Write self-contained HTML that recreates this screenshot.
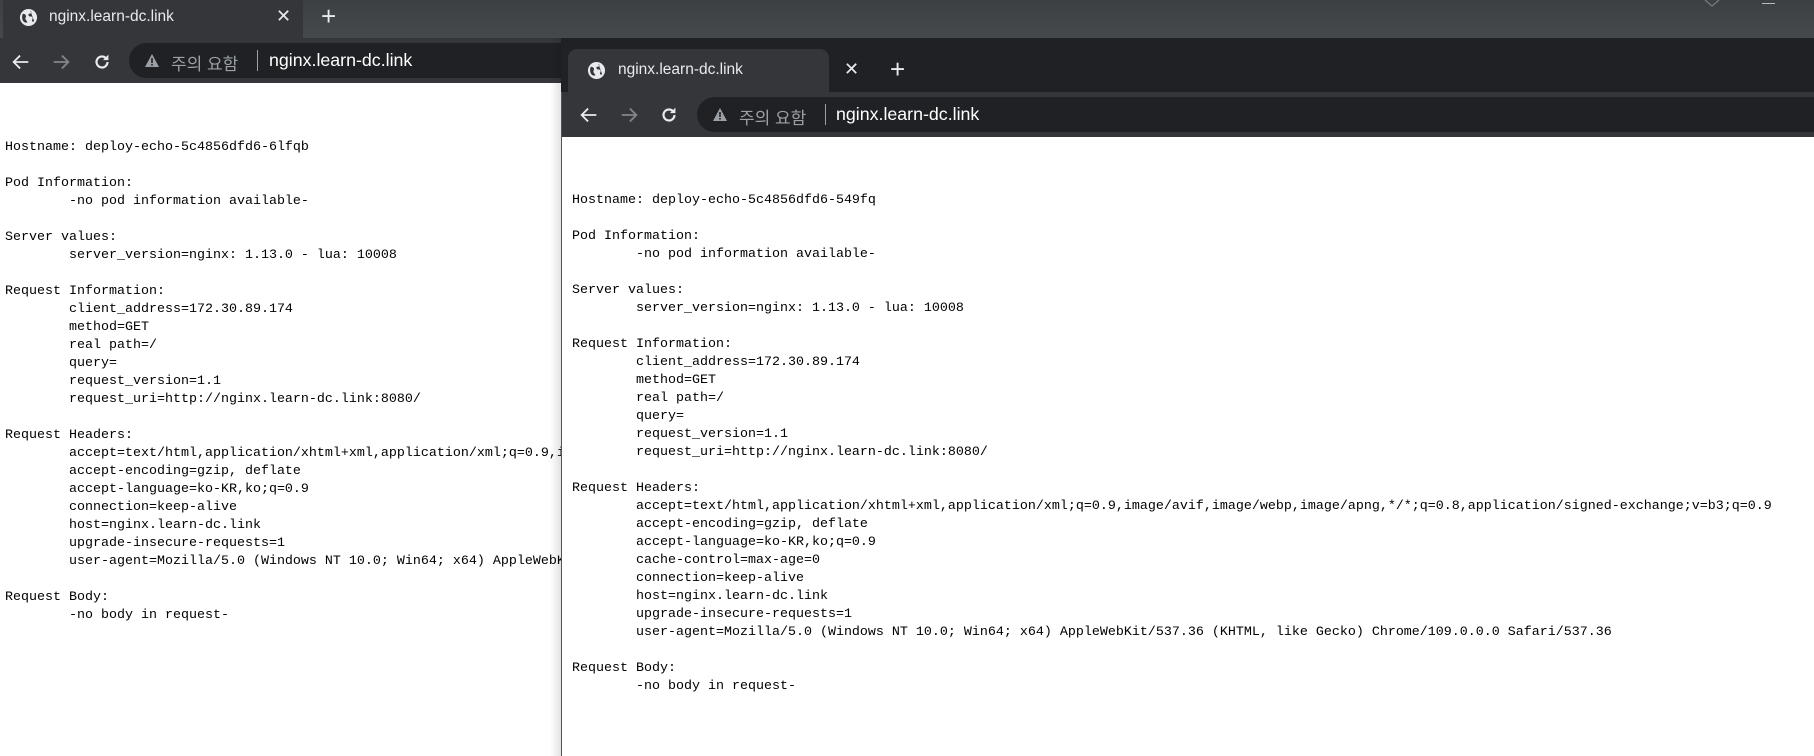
<!DOCTYPE html>
<html><head><meta charset="utf-8"><style>
*{margin:0;padding:0;box-sizing:border-box}
body{width:1814px;height:756px;overflow:hidden;background:#fff;position:relative;font-family:"Liberation Sans","Noto Sans CJK KR",sans-serif}
.abs{position:absolute}
pre{position:absolute;font-family:"Liberation Mono","NanumGothic",monospace;font-size:13.33px;line-height:18px;color:#000;white-space:pre}
.tabt{color:#e8eaed;font-size:15.5px}
.url{font-size:17.8px;color:#fff}
.ko{font-size:17px;color:#9aa0a6}
</style></head><body>
<!-- left window -->
<div class="abs" style="left:0;top:0;width:1814px;height:38px;background:linear-gradient(#3c4043,#45494c)"></div>
<div class="abs" style="left:3px;top:0;width:300px;height:40px;background:#35363a"></div>
<svg class="abs" style="left:19px;top:8px" width="19" height="19" viewBox="0 0 20 20"><circle cx="10" cy="10" r="9" fill="#e8eaed"/><path d="M4 6c3 0 4 2 3 4s1 3 2 5c-2 1-4 0-5-2-1-2-1-5 0-7zM12 3c2 1 1 3-1 3s-1 3 1 3 3 1 2 3 0 3 2 2" fill="#35363a"/></svg>
<div class="abs tabt" style="left:49px;top:8px">nginx.learn-dc.link</div>
<div class="abs" style="left:276px;top:6px;color:#e8eaed;font-size:18px">✕</div>
<div class="abs" style="left:321px;top:1px;color:#e8eaed;font-size:26px;line-height:30px">+</div>
<svg class="abs" style="left:1703px;top:0" width="18" height="8"><path d="M2 0l7 6 7-6" stroke="#888" fill="none"/></svg>
<div class="abs" style="left:1762px;top:3px;width:13px;height:1px;background:#bbb"></div>
<div class="abs" style="left:0;top:38px;width:562px;height:45px;background:#35363a"></div>
<svg class="abs" style="left:10px;top:51px" width="22" height="22" viewBox="0 0 24 24"><path d="M20 12H5M11 5l-7 7 7 7" stroke="#e8eaed" stroke-width="2" fill="none"/></svg>
<svg class="abs" style="left:50px;top:51px" width="22" height="22" viewBox="0 0 24 24"><path d="M4 12h15M13 5l7 7-7 7" stroke="#80868b" stroke-width="2" fill="none"/></svg>
<svg class="abs" style="left:91px;top:51px" width="22" height="22" viewBox="0 0 24 24"><path d="M18 12a6 6 0 1 1-2-4.5" stroke="#e8eaed" stroke-width="2.4" fill="none"/><path d="M19 4v6h-6z" fill="#e8eaed"/></svg>
<div class="abs" style="left:129px;top:43px;width:460px;height:35px;background:#202124;border-radius:18px"></div>
<svg class="abs" style="left:144px;top:53px" width="16" height="15"><path d="M8 1l7 13H1z" fill="#9aa0a6"/><rect x="7.2" y="5" width="1.6" height="5" fill="#202124"/><rect x="7.2" y="11" width="1.6" height="1.6" fill="#202124"/></svg>
<div class="abs ko" style="left:171px;top:50px">주의 요함</div>
<div class="abs" style="left:257px;top:50px;width:1px;height:21px;background:#9aa0a6"></div>
<div class="abs url" style="left:269px;top:50px">nginx.learn-dc.link</div>
<pre style="left:5px;top:139px">Hostname: deploy-echo-5c4856dfd6-6lfqb

Pod Information:
        -no pod information available-

Server values:
        server_version=nginx: 1.13.0 - lua: 10008

Request Information:
        client_address=172.30.89.174
        method=GET
        real path=/
        query=
        request_version=1.1
        request_uri=http://nginx.learn-dc.link:8080/

Request Headers:
        accept=text/html,application/xhtml+xml,application/xml;q=0.9,image/avif
        accept-encoding=gzip, deflate
        accept-language=ko-KR,ko;q=0.9
        connection=keep-alive
        host=nginx.learn-dc.link
        upgrade-insecure-requests=1
        user-agent=Mozilla/5.0 (Windows NT 10.0; Win64; x64) AppleWebKit/537.36

Request Body:
        -no body in request-</pre>
<!-- right window -->
<div class="abs" style="left:550px;top:38px;width:12px;height:718px;background:linear-gradient(90deg,rgba(0,0,0,0),rgba(0,0,0,.12))"></div>
<div class="abs" style="left:561px;top:38px;width:1253px;height:718px;background:#fff;border-left:1px solid #555"></div>
<div class="abs" style="left:561px;top:38px;width:1253px;height:54px;background:#202124"></div>
<div class="abs" style="left:568px;top:49px;width:261px;height:45px;background:#35363a;border-radius:9px 9px 0 0"></div>
<svg class="abs" style="left:587px;top:61px" width="19" height="19" viewBox="0 0 20 20"><circle cx="10" cy="10" r="9" fill="#e8eaed"/><path d="M4 6c3 0 4 2 3 4s1 3 2 5c-2 1-4 0-5-2-1-2-1-5 0-7zM12 3c2 1 1 3-1 3s-1 3 1 3 3 1 2 3 0 3 2 2" fill="#35363a"/></svg>
<div class="abs tabt" style="left:618px;top:61px">nginx.learn-dc.link</div>
<div class="abs" style="left:844px;top:59px;color:#e8eaed;font-size:18px">✕</div>
<div class="abs" style="left:890px;top:54px;color:#e8eaed;font-size:26px;line-height:30px">+</div>
<div class="abs" style="left:562px;top:92px;width:1252px;height:45px;background:#35363a"></div>
<svg class="abs" style="left:578px;top:104px" width="22" height="22" viewBox="0 0 24 24"><path d="M20 12H5M11 5l-7 7 7 7" stroke="#e8eaed" stroke-width="2" fill="none"/></svg>
<svg class="abs" style="left:618px;top:104px" width="22" height="22" viewBox="0 0 24 24"><path d="M4 12h15M13 5l7 7-7 7" stroke="#80868b" stroke-width="2" fill="none"/></svg>
<svg class="abs" style="left:658px;top:104px" width="22" height="22" viewBox="0 0 24 24"><path d="M18 12a6 6 0 1 1-2-4.5" stroke="#e8eaed" stroke-width="2.4" fill="none"/><path d="M19 4v6h-6z" fill="#e8eaed"/></svg>
<div class="abs" style="left:697px;top:97px;width:1140px;height:35px;background:#202124;border-radius:18px"></div>
<svg class="abs" style="left:712px;top:107px" width="16" height="15"><path d="M8 1l7 13H1z" fill="#9aa0a6"/><rect x="7.2" y="5" width="1.6" height="5" fill="#202124"/><rect x="7.2" y="11" width="1.6" height="1.6" fill="#202124"/></svg>
<div class="abs ko" style="left:739px;top:104px">주의 요함</div>
<div class="abs" style="left:825px;top:104px;width:1px;height:21px;background:#9aa0a6"></div>
<div class="abs url" style="left:836px;top:104px">nginx.learn-dc.link</div>
<pre style="left:572px;top:192px">Hostname: deploy-echo-5c4856dfd6-549fq

Pod Information:
        -no pod information available-

Server values:
        server_version=nginx: 1.13.0 - lua: 10008

Request Information:
        client_address=172.30.89.174
        method=GET
        real path=/
        query=
        request_version=1.1
        request_uri=http://nginx.learn-dc.link:8080/

Request Headers:
        accept=text/html,application/xhtml+xml,application/xml;q=0.9,image/avif,image/webp,image/apng,*/*;q=0.8,application/signed-exchange;v=b3;q=0.9
        accept-encoding=gzip, deflate
        accept-language=ko-KR,ko;q=0.9
        cache-control=max-age=0
        connection=keep-alive
        host=nginx.learn-dc.link
        upgrade-insecure-requests=1
        user-agent=Mozilla/5.0 (Windows NT 10.0; Win64; x64) AppleWebKit/537.36 (KHTML, like Gecko) Chrome/109.0.0.0 Safari/537.36

Request Body:
        -no body in request-</pre>
</body></html>
